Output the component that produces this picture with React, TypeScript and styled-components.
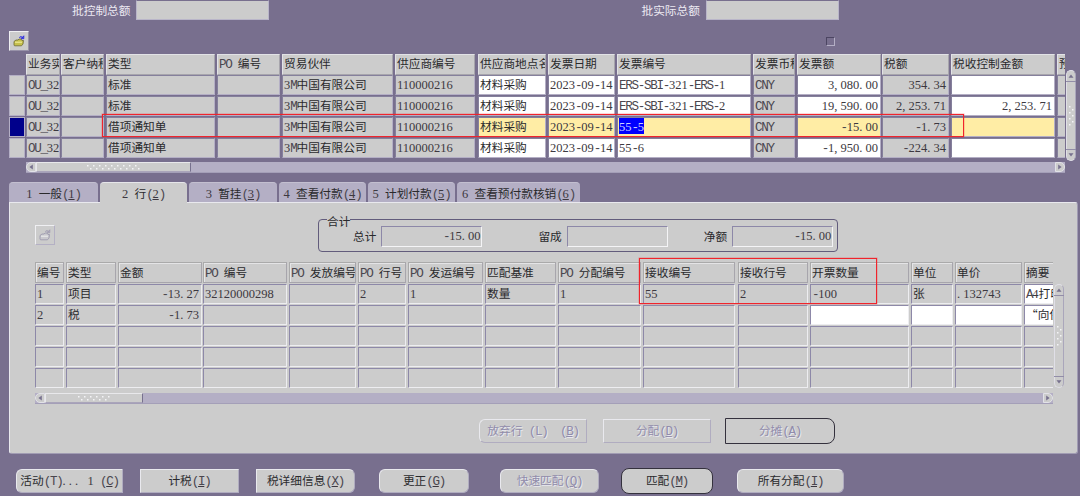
import { Fragment, ReactNode } from "react";
import styled, { createGlobalStyle, css } from "styled-components";

// Colours
const violet = "#786f8e";
const lilac = "#b4afc5";
const grey = "#cccccc";
const edge = "#8d88a8";
const yellow = "#ffeda5";

// STYLES
const GlobalStyle = createGlobalStyle`
  * { box-sizing: border-box; }
  body {
    margin: 0;
    background: ${violet};
    font: 11.7px/20px "Noto Sans CJK SC", sans-serif;
    color: #2a2a2c;
  }
`;

const Screen = styled.div`
  position: relative;
  width: 1080px;
  height: 496px;
  overflow: hidden;
  background: ${violet};
  display: flex;
  flex-direction: column;
`;

// Half-width characters all take the same 6.25px cell
const Digits = styled.span`
  font-family: "Liberation Serif", serif;
  font-size: 12.5px;
  line-height: 1;
  color: #3c3840;
`;
const Point = styled(Digits)`
  letter-spacing: 3.13px;
`;
const Latin = styled.span`
  font-family: "Liberation Mono", monospace;
  font-size: 12.6px;
  line-height: 1;
  letter-spacing: -1.31px;
  color: #4a464e;
`;

const Label = styled.span<{ $light?: boolean; $faded?: boolean }>`
  white-space: pre;
  ${({ $light }) => $light && "color: #ece9f2;"}
  ${({ $faded }) =>
    $faded &&
    css`
      color: #918cab;
      text-shadow: 1px 1px 0 #e8e8ee;
      ${Latin}, ${Digits} {
        color: #918cab;
      }
    `}
`;

const Text = ({ children, light, faded }: { children: string; light?: boolean; faded?: boolean }) => {
  const runs = children.match(/[0-9]+|[.,]+|[\x20-\x2b\x2d\x3a-\x7e]+|[^\x20-\x7e]+/g) || [];
  return (
    <Label $light={light} $faded={faded}>
      {runs.map((run, i) => {
        if (/^[0-9]/.test(run)) return <Digits key={i}>{run}</Digits>;
        if (/^[.,]/.test(run)) return <Point key={i}>{run}</Point>;
        if (/^[\x20-\x7e]/.test(run)) return <Latin key={i}>{run}</Latin>;
        return <Fragment key={i}>{run}</Fragment>;
      })}
    </Label>
  );
};

const Mnemonic = styled.span<{ $faded?: boolean }>`
  text-decoration: underline;
  text-decoration-color: ${({ $faded }) => ($faded ? "#918cab" : "#3c3840")};
  text-underline-offset: 1px;
  text-decoration-thickness: 1px;
`;

const Caption = ({ text, hot, faded }: { text: string; hot: string; faded?: boolean }) => (
  <span>
    <Text faded={faded}>{text + "("}</Text>
    <Mnemonic $faded={faded}>
      <Text faded={faded}>{hot}</Text>
    </Mnemonic>
    <Text faded={faded}>{")"}</Text>
  </span>
);

// Batch totals
const BatchBar = styled.div`
  display: flex;
  height: 21px;
  padding-left: 72px;
`;
const BatchField = styled.div<{ $w: number; $gap: number }>`
  width: ${({ $w }) => $w}px;
  height: 20px;
  margin: 0 ${({ $gap }) => $gap}px 0 6px;
  background: ${grey};
  border: 1px solid #b9b5c9;
  border-top-color: ${violet};
`;
const ToolBar = styled.div`
  display: flex;
  align-items: flex-start;
  height: 33px;
  padding: 10px 0 0 9px;
`;
const IconButton = styled.div<{ $flat?: boolean }>`
  width: 20px;
  height: 20px;
  margin-top: ${({ $flat }) => ($flat ? 6 : 0)}px;
  display: flex;
  align-items: center;
  justify-content: center;
  background: ${grey};
  border: 1px solid #efeff2;
  border-right-color: ${({ $flat }) => ($flat ? "#b4b0c4" : "#9892a9")};
  border-bottom-color: ${({ $flat }) => ($flat ? "#b4b0c4" : "#9892a9")};
`;
const TickBox = styled.div`
  width: 9px;
  height: 9px;
  margin: 6px 0 0 797px;
  border: 1px solid #4c4562;
  border-right-color: #b4afc5;
  border-bottom-color: #b4afc5;
`;

const FolderIcon = ({ off }: { off?: boolean }) => (
  <svg width="12" height="12" viewBox="0 0 12 12">
    <path
      d="M1 10V6.5L3 5h2l1-1h2l1 1.5h1.5L10 9l-1.5 1.8H1.5z"
      fill={off ? "#c9c8cd" : "#c5c04c"}
      stroke={off ? "#9894ab" : "#6d6a33"}
      strokeWidth="0.8"
    />
    <path d="M2 7.2h7" stroke={off ? "#eee" : "#f3efa0"} />
    <path
      d="M6.2 2.6Q7.8 .6 9.6 2.4M10.8.8v2.9H8.2z"
      fill={off ? "#9f9bb1" : "#2020e0"}
      fillOpacity="0.6"
      stroke={off ? "#9f9bb1" : "#2020e0"}
      strokeWidth="0.8"
    />
  </svg>
);

// Tables
type Column = { title: string; w: number; gap: number; right?: boolean };

const Row = styled.div`
  display: flex;
  height: 21px;
`;
const HeadCell = styled.div<{ $w: number; $gap: number; $flat?: boolean }>`
  flex: none;
  width: ${({ $w }) => $w}px;
  margin-right: ${({ $gap }) => $gap}px;
  height: 21px;
  padding-left: 1px;
  line-height: ${({ $flat }) => ($flat ? 18 : 16)}px;
  overflow: hidden;
  background: ${grey};
  border: 1px solid ${({ $flat }) => ($flat ? "#aaa" : "#e2e2e6")};
  border-right-color: #a7a5ac;
  border-bottom-color: #a7a5ac;
  ${({ $flat }) => $flat && "box-shadow: inset 1px 1px 0 #e4e4e6;"}
`;
const Cell = styled.div<{ $w: number; $gap: number; $right?: boolean; $fill: string; $flat?: boolean }>`
  flex: none;
  width: ${({ $w }) => $w}px;
  margin-right: ${({ $gap }) => $gap}px;
  height: 20px;
  padding: 0 ${({ $right }) => ($right ? 2 : 1)}px 0 1px;
  line-height: 15px;
  overflow: hidden;
  text-align: ${({ $right }) => ($right ? "right" : "left")};
  background: ${({ $fill }) => $fill};
  border: 1px solid ${({ $flat }) => ($flat ? edge : "#85809c")};
  border-right-color: ${({ $flat }) => ($flat ? "#ededf0" : lilac)};
  border-bottom-color: ${({ $flat }) => ($flat ? "#ededf0" : lilac)};
`;
const Selector = styled.div<{ $current?: boolean }>`
  flex: none;
  width: 16px;
  height: 20px;
  margin-right: 1px;
  background: ${({ $current }) => ($current ? "#00008b" : grey)};
  border: 1px solid ${lilac};
`;
const Selected = styled.span`
  display: inline-block;
  height: 16px;
  line-height: 15px;
  vertical-align: top;
  background: #0000ff;
  ${Digits}, ${Latin} {
    color: #cfd0ff;
  }
`;

const invoiceColumns: Column[] = [
  { title: "业务实体", w: 34, gap: 1 },
  { title: "客户纳税", w: 43, gap: 2 },
  { title: "类型", w: 109, gap: 2 },
  { title: "PO 编号", w: 63, gap: 2 },
  { title: "贸易伙伴", w: 111, gap: 2 },
  { title: "供应商编号", w: 80, gap: 3 },
  { title: "供应商地点名", w: 68, gap: 2 },
  { title: "发票日期", w: 67, gap: 2 },
  { title: "发票编号", w: 134, gap: 2 },
  { title: "发票币种", w: 42, gap: 2 },
  { title: "发票额", w: 84, gap: 1, right: true },
  { title: "税额", w: 67, gap: 2, right: true },
  { title: "税收控制金额", w: 104, gap: 2, right: true },
  { title: "预", w: 14, gap: 0 },
];
const invoices = [
  ["OU_32", "", "标准", "", "3M中国有限公司", "110000216", "材料采购", "2023-09-14", "ERS-SBI-321-ERS-1", "CNY", "3,080.00", "354.34", "", ""],
  ["OU_32", "", "标准", "", "3M中国有限公司", "110000216", "材料采购", "2023-09-14", "ERS-SBI-321-ERS-2", "CNY", "19,590.00", "2,253.71", "2,253.71", ""],
  ["OU_32", "", "借项通知单", "", "3M中国有限公司", "110000216", "材料采购", "2023-09-14", "55-5", "CNY", "-15.00", "-1.73", "", ""],
  ["OU_32", "", "借项通知单", "", "3M中国有限公司", "110000216", "材料采购", "2023-09-14", "55-6", "CNY", "-1,950.00", "-224.34", "", ""],
];
const editable = [6, 7, 8, 10, 12];
const currentRow = 2;

const lineColumns: Column[] = [
  { title: "编号", w: 29, gap: 2 },
  { title: "类型", w: 50, gap: 2 },
  { title: "金额", w: 84, gap: 1, right: true },
  { title: "PO 编号", w: 84, gap: 2 },
  { title: "PO 发放编号", w: 67, gap: 2 },
  { title: "PO 行号", w: 48, gap: 2 },
  { title: "PO 发运编号", w: 75, gap: 2 },
  { title: "匹配基准", w: 71, gap: 2 },
  { title: "PO 分配编号", w: 83, gap: 2 },
  { title: "接收编号", w: 92, gap: 3 },
  { title: "接收行号", w: 70, gap: 2 },
  { title: "开票数量", w: 99, gap: 2 },
  { title: "单位", w: 42, gap: 2 },
  { title: "单价", w: 67, gap: 2 },
  { title: "摘要", w: 40, gap: 0 },
];
const lines = [
  ["1", "项目", "-13.27", "32120000298", "", "2", "1", "数量", "1", "55", "2", "-100", "张", ".132743", "A4打印纸"],
  ["2", "税", "-1.73", "", "", "", "", "", "", "", "", "", "", "", "“向供"],
  [],
  [],
  [],
];

const lineFill = (row: number, col: number) =>
  (row === 0 && col === 14) || (row === 1 && col >= 11) ? "#fff" : grey;

const InvoiceBlock = styled.div`
  display: flex;
  height: 108px;
`;
const InvoiceTable = styled.div`
  width: 1065px;
  padding-left: 9px;
  overflow: hidden;
`;
const HeadRow = styled(Row)`
  padding-left: 17px;
`;

// Scroll bars
const HTrack = styled.div<{ $w: number; $left: number }>`
  display: flex;
  flex: none;
  width: ${({ $w }) => $w}px;
  height: 11px;
  margin-left: ${({ $left }) => $left}px;
  background: ${lilac};
  border-bottom: 1px solid #a49fb8;
`;
const Thumb = styled.div<{ $w: number }>`
  width: ${({ $w }) => $w}px;
  height: 10px;
  display: flex;
  align-items: center;
  justify-content: center;
  background: ${grey};
  border: 1px solid #e8e8eb;
  border-right-color: #77718e;
  border-bottom-color: #aaa5ba;
`;
const Arrow = styled.div<{ $end?: boolean }>`
  flex: none;
  width: 10px;
  height: 10px;
  margin-left: ${({ $end }) => ($end ? "auto" : "0")};
  display: flex;
  align-items: center;
  justify-content: center;
  background: ${grey};
  border: 1px solid #e2e2e8;
  border-radius: ${({ $end }) => ($end ? "0 5px 5px 0" : "5px 0 0 5px")};
`;
const VTrack = styled.div<{ $h: number; $top: number }>`
  width: 10px;
  height: ${({ $h }) => $h}px;
  margin-top: ${({ $top }) => $top}px;
  margin-left: 1px;
  display: flex;
  flex-direction: column;
  align-items: center;
  justify-content: space-between;
  padding: 2px 0;
  background: ${grey};
  border: 1px solid #e0dfe7;
  border-right-color: #aaa6bb;
  border-radius: 5px;
`;
const VGrip = styled.div`
  flex: 1;
  width: 10px;
  margin: 2px 0;
  display: flex;
  align-items: center;
  justify-content: center;
  border: solid #928da8;
  border-width: 1px 0;
`;

const Triangle = ({ turn }: { turn: number }) => (
  <svg width="6" height="6" viewBox="0 0 6 6">
    <path d="M.5 4.8L3 1.4l2.5 3.4z" fill="#77718e" transform={`rotate(${turn} 3 3)`} />
  </svg>
);
const Dots = ({ w, h }: { w: number; h: number }) => {
  const dots: ReactNode[] = [];
  for (let x = 0; x < w; x += 3)
    for (let y = 0; y < h; y += 3)
      if ((x / 3 + y / 3) % 2 === 0)
        dots.push(<rect key={`${x}-${y}`} x={x} y={y} width="1.5" height="1.5" fill="#f4f4f6" />);
  return (
    <svg width={w} height={h}>
      {dots}
    </svg>
  );
};
const HScroll = ({ w, left, thumb, grip }: { w: number; left: number; thumb: number; grip: number }) => (
  <HTrack $w={w} $left={left}>
    <Arrow>
      <Triangle turn={-90} />
    </Arrow>
    <Thumb $w={thumb}>
      <Dots w={grip} h={5} />
    </Thumb>
    <Arrow $end>
      <Triangle turn={90} />
    </Arrow>
  </HTrack>
);
const VScroll = ({ h, top }: { h: number; top: number }) => (
  <VTrack $h={h} $top={top}>
    <Triangle turn={0} />
    <VGrip>
      <Dots w={5} h={20} />
    </VGrip>
    <Triangle turn={180} />
  </VTrack>
);

// Tabs
const Tabs = styled.div`
  display: flex;
  align-items: flex-end;
  gap: 2px;
  height: 29px;
  padding-left: 9px;
`;
const Tab = styled.div<{ $w: number; $active?: boolean }>`
  width: ${({ $w }) => $w}px;
  height: ${({ $active }) => ($active ? 21 : 20)}px;
  margin-bottom: ${({ $active }) => ($active ? -1 : 0)}px;
  z-index: ${({ $active }) => ($active ? 1 : 0)};
  line-height: 19px;
  text-align: center;
  white-space: nowrap;
  border-radius: 4px 4px 0 0;
  background: ${({ $active }) => ($active ? grey : lilac)};
  border-top: 1px solid ${({ $active }) => ($active ? "#e6e6ea" : "#c3bfd0")};
`;
const Panel = styled.div`
  width: 1069px;
  height: 252px;
  margin-left: 9px;
  background: ${grey};
  border: 1px solid #e9e9ee;
  border-right-color: #a19cb3;
  border-bottom-color: #a19cb3;
  border-radius: 0 3px 3px 3px;
`;
const SummaryBar = styled.div`
  display: flex;
  height: 59px;
  padding: 16px 0 0 25px;
`;
const Totals = styled.div`
  position: relative;
  display: flex;
  width: 520px;
  height: 33px;
  margin-left: 263px;
  padding: 6px 0 0 34px;
  border: 1px solid #625c7c;
  border-radius: 4px;
`;
const Legend = styled.span`
  position: absolute;
  top: -8px;
  left: 8px;
  height: 16px;
  line-height: 17px;
  background: ${grey};
`;
const TotalField = styled.div<{ $gap: number }>`
  width: 101px;
  height: 21px;
  margin: 0 ${({ $gap }) => $gap}px 0 5px;
  padding-right: 1px;
  line-height: 16px;
  text-align: right;
  border: 1px solid ${edge};
  border-right-color: #f4f4f6;
  border-bottom-color: #f4f4f6;
`;
const LineBlock = styled.div`
  display: flex;
  height: 131px;
  padding-left: 25px;
`;
const LineTable = styled.div`
  width: 1018px;
  overflow: hidden;
`;
const LineHead = styled(Row)`
  height: 22px;
`;

// Buttons
const LineActions = styled.div`
  display: flex;
  height: 42px;
  padding: 15px 0 0 469px;
`;
const Footer = styled.div`
  display: flex;
  padding: 15px 0 0 16px;
`;
const Button = styled.div<{ $w: number; $gap: number; $radius?: string; $framed?: boolean }>`
  flex: none;
  width: ${({ $w }) => $w}px;
  height: 24px;
  margin-right: ${({ $gap }) => $gap}px;
  line-height: 20px;
  text-align: center;
  background: ${grey};
  border: 1px solid #e9e9ee;
  border-right-color: #b0acc0;
  border-bottom-color: #b0acc0;
  border-radius: ${({ $radius }) => $radius || "0"};
  ${({ $framed }) =>
    $framed &&
    css`
      height: 26px;
      margin-top: -1px;
      line-height: 22px;
      border-color: #34313d;
    `}
`;

// Red marker drawn over the tables
const Marker = styled.div<{ $x: number; $y: number; $w: number; $h: number }>`
  position: absolute;
  z-index: 2;
  left: ${({ $x }) => $x}px;
  top: ${({ $y }) => $y}px;
  width: ${({ $w }) => $w}px;
  height: ${({ $h }) => $h}px;
  border: 1px solid #f0242c;
  box-shadow: 0 0 0 0.5px rgba(240, 36, 44, 0.35);
`;

const App = () => {
  return (
    <>
      <GlobalStyle />
      <Screen>
        <BatchBar>
          <Text light>批控制总额</Text>
          <BatchField $w={133} $gap={372} />
          <Text light>批实际总额</Text>
          <BatchField $w={133} $gap={0} />
        </BatchBar>
        <ToolBar>
          <IconButton>
            <FolderIcon />
          </IconButton>
          <TickBox />
        </ToolBar>

        <InvoiceBlock>
          <InvoiceTable>
            <HeadRow>
              {invoiceColumns.map(col => (
                <HeadCell key={col.title} $w={col.w} $gap={col.gap}>
                  <Text>{col.title}</Text>
                </HeadCell>
              ))}
            </HeadRow>
            {invoices.map((invoice, r) => (
              <Row key={r}>
                <Selector $current={r === currentRow} />
                {invoiceColumns.map((col, c) => (
                  <Cell
                    key={c}
                    $w={col.w}
                    $gap={col.gap}
                    $right={col.right}
                    $fill={editable.includes(c) ? (r === currentRow ? yellow : "#fff") : grey}
                  >
                    {r === currentRow && c === 8 ? (
                      <Selected>
                        <Text>{invoice[c]}</Text>
                      </Selected>
                    ) : (
                      <Text>{invoice[c]}</Text>
                    )}
                  </Cell>
                ))}
              </Row>
            ))}
          </InvoiceTable>
          <VScroll h={91} top={16} />
        </InvoiceBlock>
        <HScroll w={1039} left={26} thumb={155} grip={53} />

        <Tabs>
          <Tab $w={89}>
            <Caption text="1 一般" hot="1" />
          </Tab>
          <Tab $w={87} $active>
            <Caption text="2 行" hot="2" />
          </Tab>
          <Tab $w={88}>
            <Caption text="3 暂挂" hot="3" />
          </Tab>
          <Tab $w={87}>
            <Caption text="4 查看付款" hot="4" />
          </Tab>
          <Tab $w={87}>
            <Caption text="5 计划付款" hot="5" />
          </Tab>
          <Tab $w={123}>
            <Caption text="6 查看预付款核销" hot="6" />
          </Tab>
        </Tabs>

        <Panel>
          <SummaryBar>
            <IconButton $flat>
              <FolderIcon off />
            </IconButton>
            <Totals>
              <Legend>合计</Legend>
              <Text>总计</Text>
              <TotalField $gap={56}>
                <Text>-15.00</Text>
              </TotalField>
              <Text>留成</Text>
              <TotalField $gap={36} />
              <Text>净额</Text>
              <TotalField $gap={0}>
                <Text>-15.00</Text>
              </TotalField>
            </Totals>
          </SummaryBar>
          <LineBlock>
            <LineTable>
              <LineHead>
                {lineColumns.map(col => (
                  <HeadCell key={col.title} $w={col.w} $gap={col.gap} $flat>
                    <Text>{col.title}</Text>
                  </HeadCell>
                ))}
              </LineHead>
              {lines.map((line, r) => (
                <Row key={r}>
                  {lineColumns.map((col, c) => (
                    <Cell
                      key={c}
                      $w={col.w}
                      $gap={col.gap}
                      $right={col.right}
                      $fill={lineFill(r, c)}
                      $flat
                    >
                      <Text>{line[c] || ""}</Text>
                    </Cell>
                  ))}
                </Row>
              ))}
            </LineTable>
            <VScroll h={104} top={22} />
          </LineBlock>
          <HScroll w={1018} left={25} thumb={98} grip={32} />
          <LineActions>
            <Button $w={108} $gap={16} $radius="6px 0 0 6px">
              <Caption text="放弃行 (L)  " hot="B" faded />
            </Button>
            <Button $w={108} $gap={14}>
              <Caption text="分配" hot="D" faded />
            </Button>
            <Button $w={110} $gap={0} $radius="0 8px 8px 0" $framed>
              <Caption text="分摊" hot="A" faded />
            </Button>
          </LineActions>
        </Panel>

        <Footer>
          <Button $w={107} $gap={17} $radius="6px 0 0 6px">
            <Caption text="活动(T)... 1 " hot="C" />
          </Button>
          <Button $w={99} $gap={17}>
            <Caption text="计税" hot="I" />
          </Button>
          <Button $w={99} $gap={24} $radius="0 6px 6px 0">
            <Caption text="税详细信息" hot="X" />
          </Button>
          <Button $w={90} $gap={31} $radius="6px">
            <Caption text="更正" hot="G" />
          </Button>
          <Button $w={99} $gap={22} $radius="6px">
            <Caption text="快速匹配" hot="Q" faded />
          </Button>
          <Button $w={92} $gap={24} $radius="8px" $framed>
            <Caption text="匹配" hot="M" />
          </Button>
          <Button $w={107} $gap={0} $radius="6px">
            <Caption text="所有分配" hot="I" />
          </Button>
        </Footer>

        <Marker $x={102} $y={114} $w={862} $h={23} />
        <Marker $x={639} $y={258} $w={238} $h={46} />
      </Screen>
    </>
  );
};

export default App;
